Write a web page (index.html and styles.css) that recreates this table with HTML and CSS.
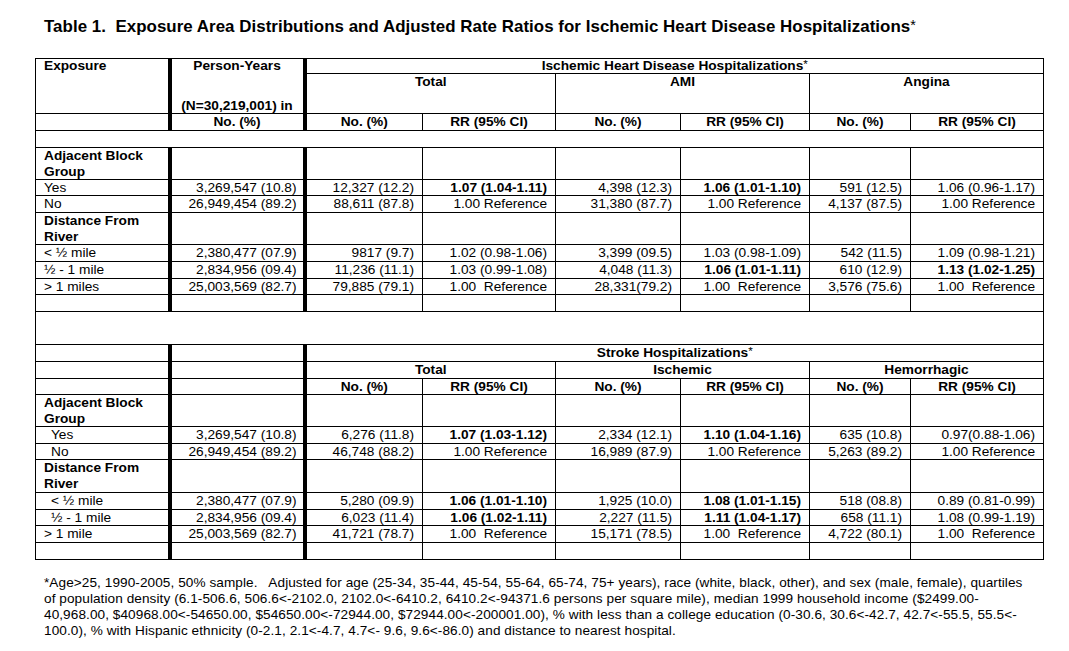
FILE: index.html
```html
<!DOCTYPE html>
<html lang="en">
<head>
<meta charset="utf-8">
<title>Table 1</title>
<link rel="stylesheet" href="styles.css">
</head>
<body>
<div class="page">
  <h1 class="title">Table 1.&nbsp; Exposure Area Distributions and Adjusted Rate Ratios for Ischemic Heart Disease Hospitalizations<span class="ast">*</span></h1>
  <table class="tbl">
    <colgroup>
      <col class="w1"><col class="w2"><col class="w3"><col class="w4"><col class="w5"><col class="w6"><col class="w7"><col class="w8">
    </colgroup>
    <tbody>
      <tr class="h15">
        <td class="k b hb">Exposure</td>
        <td class="k b c hb">Person-Years</td>
        <td class="b c" colspan="6">Ischemic Heart Disease Hospitalizations<span class="ast">*</span></td>
      </tr>
      <tr class="h40">
        <td class="k"></td>
        <td class="k b c bot">(N=30,219,001) in</td>
        <td class="b c" colspan="2">Total</td>
        <td class="b c" colspan="2">AMI</td>
        <td class="b c" colspan="2">Angina</td>
      </tr>
      <tr class="h17">
        <td class="k"></td>
        <td class="k b c">No. (%)</td>
        <td class="b c">No. (%)</td><td class="b c">RR (95% CI)</td>
        <td class="b c">No. (%)</td><td class="b c">RR (95% CI)</td>
        <td class="b c">No. (%)</td><td class="b c">RR (95% CI)</td>
      </tr>
      <tr class="h17"><td colspan="8"></td></tr>
      <tr class="h32">
        <td class="k b">Adjacent Block Group</td>
        <td class="k"></td><td></td><td></td><td></td><td></td><td></td><td></td>
      </tr>
      <tr class="h16">
        <td class="k">Yes</td><td class="k r">3,269,547 (10.8)</td>
        <td class="r">12,327 (12.2)</td><td class="r b">1.07 (1.04-1.11)</td>
        <td class="r">4,398 (12.3)</td><td class="r b">1.06 (1.01-1.10)</td>
        <td class="r">591 (12.5)</td><td class="r">1.06 (0.96-1.17)</td>
      </tr>
      <tr class="h17">
        <td class="k">No</td><td class="k r">26,949,454 (89.2)</td>
        <td class="r">88,611 (87.8)</td><td class="r">1.00 Reference</td>
        <td class="r">31,380 (87.7)</td><td class="r">1.00 Reference</td>
        <td class="r">4,137 (87.5)</td><td class="r">1.00 Reference</td>
      </tr>
      <tr class="h32">
        <td class="k b">Distance From River</td>
        <td class="k"></td><td></td><td></td><td></td><td></td><td></td><td></td>
      </tr>
      <tr class="h17">
        <td class="k">&lt; ½ mile</td><td class="k r">2,380,477 (07.9)</td>
        <td class="r">9817 (9.7)</td><td class="r">1.02 (0.98-1.06)</td>
        <td class="r">3,399 (09.5)</td><td class="r">1.03 (0.98-1.09)</td>
        <td class="r">542 (11.5)</td><td class="r">1.09 (0.98-1.21)</td>
      </tr>
      <tr class="h17">
        <td class="k">½ - 1 mile</td><td class="k r">2,834,956 (09.4)</td>
        <td class="r">11,236 (11.1)</td><td class="r">1.03 (0.99-1.08)</td>
        <td class="r">4,048 (11.3)</td><td class="r b">1.06 (1.01-1.11)</td>
        <td class="r">610 (12.9)</td><td class="r b">1.13 (1.02-1.25)</td>
      </tr>
      <tr class="h16">
        <td class="k">&gt; 1 miles</td><td class="k r">25,003,569 (82.7)</td>
        <td class="r">79,885 (79.1)</td><td class="r">1.00&nbsp; Reference</td>
        <td class="r">28,331(79.2)</td><td class="r">1.00&nbsp; Reference</td>
        <td class="r">3,576 (75.6)</td><td class="r">1.00&nbsp; Reference</td>
      </tr>
      <tr class="h17">
        <td class="k"></td><td class="k"></td><td></td><td></td><td></td><td></td><td></td><td></td>
      </tr>
      <tr class="h33"><td colspan="8"></td></tr>
      <tr class="h17">
        <td class="k"></td><td class="k"></td>
        <td class="b c" colspan="6">Stroke Hospitalizations<span class="ast">*</span></td>
      </tr>
      <tr class="h17">
        <td class="k"></td><td class="k"></td>
        <td class="b c" colspan="2">Total</td>
        <td class="b c" colspan="2">Ischemic</td>
        <td class="b c" colspan="2">Hemorrhagic</td>
      </tr>
      <tr class="h16">
        <td class="k"></td><td class="k"></td>
        <td class="b c">No. (%)</td><td class="b c">RR (95% CI)</td>
        <td class="b c">No. (%)</td><td class="b c">RR (95% CI)</td>
        <td class="b c">No. (%)</td><td class="b c">RR (95% CI)</td>
      </tr>
      <tr class="h32">
        <td class="k b">Adjacent Block Group</td>
        <td class="k"></td><td></td><td></td><td></td><td></td><td></td><td></td>
      </tr>
      <tr class="h17">
        <td class="k ind">Yes</td><td class="k r">3,269,547 (10.8)</td>
        <td class="r">6,276 (11.8)</td><td class="r b">1.07 (1.03-1.12)</td>
        <td class="r">2,334 (12.1)</td><td class="r b">1.10 (1.04-1.16)</td>
        <td class="r">635 (10.8)</td><td class="r">0.97(0.88-1.06)</td>
      </tr>
      <tr class="h16">
        <td class="k ind">No</td><td class="k r">26,949,454 (89.2)</td>
        <td class="r">46,748 (88.2)</td><td class="r">1.00 Reference</td>
        <td class="r">16,989 (87.9)</td><td class="r">1.00 Reference</td>
        <td class="r">5,263 (89.2)</td><td class="r">1.00 Reference</td>
      </tr>
      <tr class="h33">
        <td class="k b">Distance From River</td>
        <td class="k"></td><td></td><td></td><td></td><td></td><td></td><td></td>
      </tr>
      <tr class="h17">
        <td class="k ind">&lt; ½ mile</td><td class="k r">2,380,477 (07.9)</td>
        <td class="r">5,280 (09.9)</td><td class="r b">1.06 (1.01-1.10)</td>
        <td class="r">1,925 (10.0)</td><td class="r b">1.08 (1.01-1.15)</td>
        <td class="r">518 (08.8)</td><td class="r">0.89 (0.81-0.99)</td>
      </tr>
      <tr class="h16">
        <td class="k ind">½ - 1 mile</td><td class="k r">2,834,956 (09.4)</td>
        <td class="r">6,023 (11.4)</td><td class="r b">1.06 (1.02-1.11)</td>
        <td class="r">2,227 (11.5)</td><td class="r b">1.11 (1.04-1.17)</td>
        <td class="r">658 (11.1)</td><td class="r">1.08 (0.99-1.19)</td>
      </tr>
      <tr class="h17">
        <td class="k">&gt; 1 mile</td><td class="k r">25,003,569 (82.7)</td>
        <td class="r">41,721 (78.7)</td><td class="r">1.00&nbsp; Reference</td>
        <td class="r">15,171 (78.5)</td><td class="r">1.00&nbsp; Reference</td>
        <td class="r">4,722 (80.1)</td><td class="r">1.00&nbsp; Reference</td>
      </tr>
      <tr class="h17">
        <td class="k"></td><td class="k"></td><td></td><td></td><td></td><td></td><td></td><td></td>
      </tr>
    </tbody>
  </table>
  <p class="note">*Age&gt;25, 1990-2005, 50% sample.&nbsp;&nbsp; Adjusted for age (25-34, 35-44, 45-54, 55-64, 65-74, 75+ years), race (white, black, other), and sex (male, female), quartiles<br>of population density (6.1-506.6, 506.6&lt;-2102.0, 2102.0&lt;-6410.2, 6410.2&lt;-94371.6 persons per square mile), median 1999 household income ($2499.00-<br>40,968.00, $40968.00&lt;-54650.00, $54650.00&lt;-72944.00, $72944.00&lt;-200001.00), % with less than a college education (0-30.6, 30.6&lt;-42.7, 42.7&lt;-55.5, 55.5&lt;-<br>100.0), % with Hispanic ethnicity (0-2.1, 2.1&lt;-4.7, 4.7&lt;- 9.6, 9.6&lt;-86.0) and distance to nearest hospital.</p>
</div>
</body>
</html>
```

FILE: styles.css
```css
html, body {
  margin: 0;
  padding: 0;
  background: #ffffff;
}

.page {
  padding: 17px 0 0 35px;
  font-family: "Liberation Sans", Arial, sans-serif;
  color: #000;
}

.title {
  margin: 0 0 21px 9px;
  font-size: 16.9px;
  line-height: 20px;
  font-weight: bold;
  letter-spacing: 0.04px;
  white-space: nowrap;
}

.ast {
  font-weight: normal;
  font-size: 0.85em;
  line-height: 0;
  vertical-align: 0.15em;
}

.tbl {
  border-collapse: collapse;
  table-layout: fixed;
  width: 1008px;
  font-size: 13.7px;
  line-height: 15px;
}

.w1 { width: 134px; }
.w2 { width: 135px; }
.w3 { width: 118px; }
.w4 { width: 133px; }
.w5 { width: 125px; }
.w6 { width: 129px; }
.w7 { width: 101px; }
.w8 { width: 133px; }

.tbl td {
  border: 1px solid #000;
  padding: 0 8px;
  vertical-align: top;
  overflow: hidden;
}

.tbl td.k { border-right: 4px solid #000; }
.tbl td.hb { border-bottom: hidden; }
.tbl td.b { font-weight: bold; }
.tbl td.c { text-align: center; }
.tbl td.r { text-align: right; white-space: nowrap; }
.tbl td.k.r { padding-right: 6px; }
.tbl td.bot { vertical-align: bottom; }
.tbl td.ind { padding-left: 15px; }

.h15 { height: 15px; }
.h15 td { line-height: 14px; }
.h16 { height: 16px; }
.h17 { height: 17px; }
.h32 { height: 32px; }
.h32 td { line-height: 15.5px; }
.h33 { height: 33px; }
.h33 td { line-height: 16px; }
.h40 { height: 40px; }

.note {
  margin: 15px 0 0 9px;
  font-size: 13.6px;
  line-height: 16px;
  letter-spacing: 0.075px;
  white-space: nowrap;
}
```
